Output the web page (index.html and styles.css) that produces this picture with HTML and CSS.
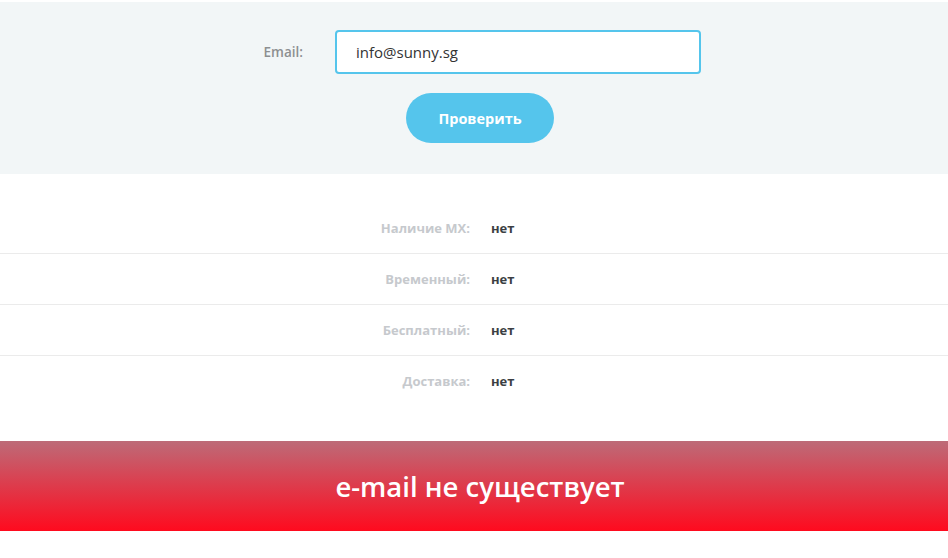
FILE: index.html
```html
<!DOCTYPE html>
<html lang="ru">
<head>
    <meta charset="UTF-8">
    <meta name="viewport" content="width=device-width, initial-scale=1.0">
    <title>Проверка e-mail</title>
    <link rel="stylesheet" href="styles.css">
</head>
<body>
    <section class="check-form">
        <div class="form-row">
            <label for="email">Email:</label>
            <input type="text" id="email" value="info@sunny.sg">
        </div>
        <button type="button" class="check-btn">Проверить</button>
    </section>
    <section class="results">
        <div class="result-row">
            <span class="result-label">Наличие MX:</span>
            <span class="result-value">нет</span>
        </div>
        <div class="result-row">
            <span class="result-label">Временный:</span>
            <span class="result-value">нет</span>
        </div>
        <div class="result-row">
            <span class="result-label">Бесплатный:</span>
            <span class="result-value">нет</span>
        </div>
        <div class="result-row">
            <span class="result-label">Доставка:</span>
            <span class="result-value">нет</span>
        </div>
    </section>
    <div class="status status-bad">e-mail не существует</div>
</body>
</html>
```

FILE: styles.css
```css
body {
    font-family: 'Open Sans', 'Liberation Sans', sans-serif;
    margin: 0;
    background-color: #ffffff;
    color: #3c3f44;
}
.check-form {
    margin-top: 2px;
    height: 172px;
    box-sizing: border-box;
    padding-top: 28px;
    background-color: #f2f6f7;
}
.form-row {
    display: flex;
    align-items: center;
    padding-left: 230px;
}
.form-row label {
    width: 73px;
    text-align: right;
    margin-right: 32px;
    font-size: 13.5px;
    font-weight: 600;
    color: #8d8f91;
}
.form-row input {
    width: 366px;
    height: 44px;
    box-sizing: border-box;
    padding: 0 19px;
    border: 2px solid #55c5ec;
    border-radius: 4px;
    background-color: #ffffff;
    font-family: 'Open Sans', 'Liberation Sans', sans-serif;
    font-size: 15px;
    color: #333333;
    outline: none;
}
.check-btn {
    display: block;
    margin: 19px 0 0 406px;
    width: 148px;
    height: 50px;
    border: none;
    border-radius: 25px;
    background-color: #55c5ec;
    color: #ffffff;
    font-family: 'Open Sans', 'Liberation Sans', sans-serif;
    font-size: 14.5px;
    font-weight: 700;
    cursor: pointer;
}
.results {
    padding: 29px 0 35px;
}
.result-row {
    display: grid;
    grid-template-columns: 470px 1fr;
    column-gap: 21px;
    align-items: center;
    height: 50px;
    font-size: 13px;
    font-weight: 700;
}
.result-row + .result-row {
    border-top: 1px solid #ebebeb;
}
.result-label {
    text-align: right;
    color: #c6c9cd;
}
.result-value {
    color: #3c3f44;
}
.status {
    height: 90px;
    display: flex;
    align-items: center;
    justify-content: center;
    padding-left: 12px;
    color: #ffffff;
    font-size: 27.5px;
    font-weight: 600;
}
.status-bad {
    background: linear-gradient(180deg, #bd6b78, #ff0a1e);
}
```
